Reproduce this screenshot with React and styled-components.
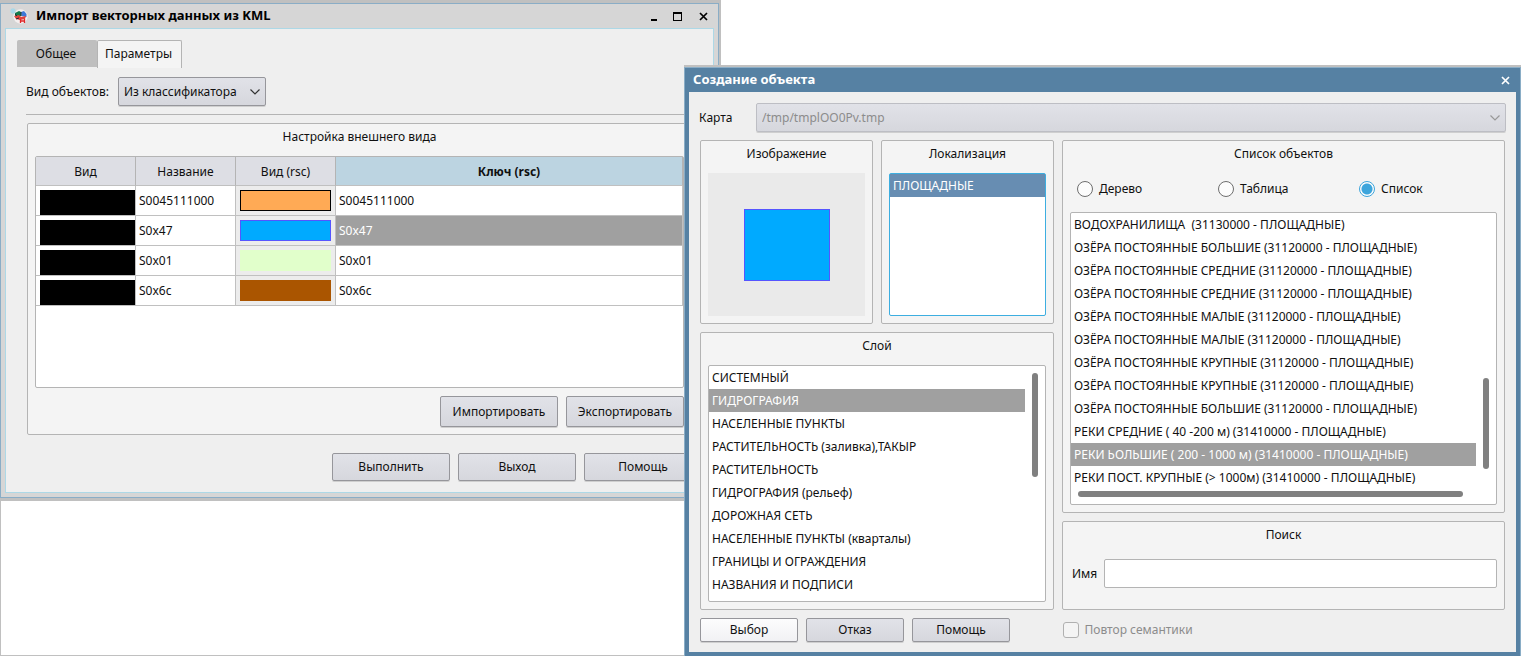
import React, { useState } from "react";
import styled, { createGlobalStyle } from "styled-components";

const GlobalStyle = createGlobalStyle`
	* {
		box-sizing: border-box;
	}
	body {
		margin: 0;
		background: #fff;
	}
	body, button, select, input {
		font-family: "Noto Sans", "Open Sans", sans-serif;
		font-size: 12px;
		line-height: 16px;
		color: #101010;
	}
`;

const Desktop = styled.div`
	position: relative;
	min-height: 100vh;
	border-left: 1px solid #c0c0c0;
	border-bottom: 1px solid #c0c0c0;
`;

/* import window */

const ImportShadow = styled.section`
	position: absolute;
	top: 0;
	left: -1px;
	right: 800px;
	padding: 3px 2px 3px 0;
	background: #c0c0c0;
`;

const ImportFrame = styled.div`
	border: 1px solid #8aadc6;
	padding: 0 4px 4px;
	background: #d6d6d6;
`;

const ImportTitleBar = styled.header`
	display: flex;
	align-items: center;
	height: 24px;
	padding: 0 1px 0 5px;
	gap: 8px;
	color: #000;
`;

const WindowTitle = styled.h1`
	flex: 1;
	margin: 0;
	padding-bottom: 2px;
	font-size: 13px;
	line-height: 18px;
	font-weight: bold;
`;

const WindowButtons = styled.div`
	display: flex;
`;

const WindowButton = styled.button`
	display: flex;
	align-items: center;
	justify-content: center;
	width: ${props => props.$width || 22}px;
	height: 20px;
	padding: 0;
	border: 0;
	background: none;
	color: inherit;
`;

const ImportBody = styled.div`
	border: 1px solid #add8e6;
	padding: 11px;
	background: #efefef;
`;

const Tabs = styled.div`
	display: flex;
	height: 28px;
`;

const Tab = styled.button`
	width: ${props => (props.$active ? 85 : 80)}px;
	height: ${props => (props.$active ? 28 : 27)}px;
	padding: 0 2px ${props => (props.$active ? 2 : 0)}px 0;
	border: 1px solid ${props => (props.$active ? "#b4b4b4" : "#bfbfbf")};
	border-bottom: 0;
	border-radius: 2px 2px 0 0;
	background: ${props => (props.$active ? "#f4f4f4" : "#bfbfbf")};
`;

const TabPanel = styled.div`
	padding: 9px 9px 0;
`;

const KindRow = styled.div`
	display: flex;
	align-items: center;
	gap: 9px;
	padding-bottom: 8px;
	border-bottom: 1px solid #b4b4b4;
`;

const SelectBox = styled.div`
	display: grid;
	align-items: center;
	width: ${props => props.$width || "auto"};
	flex: ${props => (props.$grow ? 1 : "none")};

	> * {
		grid-area: 1 / 1;
	}
	> svg {
		justify-self: end;
		margin-right: 5px;
		pointer-events: none;
	}
`;

const Select = styled.select`
	appearance: none;
	width: 100%;
	height: 29px;
	padding: 0 24px 0 5px;
	border: 1px solid #96969b;
	border-radius: 2px;
	background: linear-gradient(#e1e2e8, #d6d7dd);
	box-shadow: 0 1px 0 #cfcfcf;

	&:disabled {
		border-color: #bdbec4;
		color: #8c8c8c;
		opacity: 1;
	}
`;

const Group = styled.fieldset`
	display: flex;
	flex-direction: column;
	min-width: 0;
	margin: 0;
	padding: 5px 7px 7px;
	border: 1px solid #b4b4b4;
	border-radius: 2px;
	background: #f4f4f4;
`;

const AppearanceGroup = styled(Group)`
	margin: 8px 1px 0;
`;

const GroupTitle = styled.h2`
	margin: 0 0 11px;
	font-size: 12px;
	line-height: 16px;
	font-weight: normal;
	text-align: center;
`;

const TableFrame = styled.div`
	height: 232px;
	border: 1px solid #b4b4b4;
	border-radius: 2px;
	background: #fff;
`;

const Table = styled.table`
	width: 100%;
	table-layout: fixed;
	border-collapse: separate;
	border-spacing: 0;
`;

const HeadCell = styled.th`
	width: ${props => (props.$wide ? "auto" : "100px")};
	height: 29px;
	padding: 2px 0 0;
	border-right: 1px solid #b4b4b4;
	border-bottom: 1px solid #c0c0c0;
	background: ${props => (props.$wide ? "#bcd4e1" : "#dddee4")};
	font-weight: ${props => (props.$wide ? "bold" : "normal")};
`;

const Cell = styled.td`
	height: 30px;
	padding: ${props => props.$pad || "0 3px"};
	border-right: 1px solid #c0c0c0;
	border-bottom: 1px solid #c0c0c0;
	background: ${props => props.$bg || "#fff"};
	color: ${props => (props.$selected ? "#fff" : "inherit")};
`;

const Swatch = styled.div`
	height: ${props => props.$height || 21}px;
	border: 1px solid ${props => props.$border || props.$color};
	background: ${props => props.$color};
`;

const Buttons = styled.div`
	display: flex;
	justify-content: ${props => (props.$start ? "flex-start" : "flex-end")};
	gap: 8px;
	margin-top: ${props => props.$top || 0}px;
`;

const Button = styled.button`
	width: ${props => props.$width || 118}px;
	height: ${props => props.$height || 28}px;
	padding: 0;
	border: 1px solid #96969b;
	border-radius: 2px;
	background: ${props =>
		props.$light
			? "linear-gradient(#fcfcfd, #f1f1f4)"
			: "linear-gradient(#e1e2e8, #d6d7dd)"};
	box-shadow: 0 1px 0 #cfcfcf;
`;

/* object dialog */

const DialogShadow = styled.section`
	position: absolute;
	top: 65px;
	left: 683px;
	right: 0;
	padding-top: 2px;
	background: #c0c0c0;
`;

const DialogFrame = styled.div`
	border: 1px solid #8aadc6;
	border-bottom: 0;
	padding: 0 4px 4px;
	background: #5681a3;
`;

const DialogTitleBar = styled.header`
	display: flex;
	align-items: center;
	height: 24px;
	padding-left: 4px;
	color: #fff;
`;

const DialogBody = styled.div`
	padding: 11px 10px 10px;
	background: #efefef;
`;

const MapRow = styled.div`
	display: flex;
	align-items: center;

	> label {
		width: 57px;
	}
`;

const Columns = styled.div`
	display: grid;
	grid-template-columns: 354fr 443fr;
	gap: 8px;
	margin: 8px 1px 0;
`;

const Column = styled.div`
	display: flex;
	flex-direction: column;
	gap: 8px;
	min-width: 0;
`;

const Pair = styled.div`
	display: grid;
	grid-template-columns: 1fr 1fr;
	gap: 8px;
	height: 184px;
`;

const Preview = styled.div`
	display: flex;
	flex: 1;
	align-items: center;
	justify-content: center;
	background: #eaeaea;

	> div {
		width: 86px;
		height: 72px;
		border: 1px solid #5555ff;
		background: #00aaff;
	}
`;

const ListBox = styled.div`
	display: flex;
	height: ${props => props.$height}px;
	border: 1px solid ${props => (props.$focused ? "#3daee0" : "#b4b4b4")};
	border-radius: 2px;
	background: #fff;
`;

const ListColumn = styled.div`
	flex: 1;
	min-width: 0;
`;

const List = styled.ul`
	flex: 1;
	min-width: 0;
	margin: 0;
	padding: 0;
	list-style: none;
`;

const Item = styled.li`
	height: 23px;
	padding: 0 3px;
	line-height: 23px;
	white-space: pre;
	overflow: hidden;
	background: ${props =>
		props.$selected ? (props.$active ? "#678db2" : "#a0a0a0") : "none"};
	color: ${props => (props.$selected ? "#fff" : "inherit")};
`;

const VerticalTrack = styled.div`
	width: 20px;
	padding: ${props => props.$top}px 7px 0;
`;

const HorizontalTrack = styled.div`
	padding: 2px 13px 0 7px;
`;

const Thumb = styled.div`
	height: ${props => props.$size || 6}px;
	border-radius: 3px;
	background: #808080;
`;

const Views = styled.div`
	display: grid;
	grid-template-columns: 141px 141px 1fr;
	margin: 8px 0 15px;
	padding-left: 7px;
`;

const Choice = styled.label`
	display: flex;
	align-items: center;
	gap: 6px;
	color: ${props => (props.$disabled ? "#8c8c8c" : "inherit")};
`;

const Radio = styled.input`
	appearance: none;
	width: 16px;
	height: 16px;
	margin: 0;
	border: 1px solid #6e6e6e;
	border-radius: 50%;
	background: #fcfcfc;

	&:checked {
		border-color: #3da5dc;
		background: radial-gradient(#3da5dc 5px, #fcfcfc 6px);
	}
`;

const Checkbox = styled.input`
	appearance: none;
	width: 16px;
	height: 16px;
	margin: 0;
	border: 1px solid #b0b0b0;
	border-radius: 3px;
	background: #f4f4f4;
`;

const SearchRow = styled.div`
	display: flex;
	align-items: center;
	gap: 7px;
	margin-top: 5px;
	padding: 0 0 14px 2px;
`;

const TextInput = styled.input`
	flex: 1;
	min-width: 0;
	height: 29px;
	padding: 0 4px;
	border: 1px solid #b4b4b4;
	border-radius: 2px;
	background: #fff;
`;

const Footer = styled.div`
	display: grid;
	grid-template-columns: 354fr 443fr;
	align-items: center;
	gap: 9px;
	margin: 8px 1px 0;
`;

const Chevron = ({ color = "#333" }) => (
	<svg width="12" height="8" viewBox="0 0 12 8" fill="none" stroke={color}>
		<path d="M1.5 1.5 L6 6 L10.5 1.5" strokeWidth="1.2" />
	</svg>
);

const CloseIcon = () => (
	<svg width="9" height="9" viewBox="0 0 9 9" fill="none" stroke="currentColor">
		<path d="M1 1 L8 8 M8 1 L1 8" strokeWidth="1.7" />
	</svg>
);

const AppIcon = () => (
	<svg width="18" height="16" viewBox="0 0 18 16">
		<circle cx="10.5" cy="8.5" r="7.2" fill="#f4efef" />
		<path d="M0 3h6M3 0v6M1 1l4 4M5 1L1 5" stroke="#a8d8e8" strokeWidth="1.2" />
		<path d="M5 5l4-2 2 1v4l-6 1z" fill="#137a4a" />
		<path d="M11 4l3-1 2.500 3v3l-5-1z" fill="#3b78d8" />
		<path d="M4 8l5-1 2 2 5-1-1 3-5 1-4-1z" fill="#e0433c" />
		<path d="M5 6l2 2M11 4v4M6 11l3-1" stroke="#263238" />
		<path d="M10.500 11v4M14.500 11v4M10.500 13h4" stroke="#e02828" strokeWidth="1.3" />
	</svg>
);

const columns = ["Вид", "Название", "Вид (rsc)", "Ключ (rsc)"];

const rows = [
	{ key: "S0045111000", color: "#ffaa55", border: "#000" },
	{ key: "S0x47", color: "#00aaff", border: "#5555ff" },
	{ key: "S0x01", color: "#e1ffcb" },
	{ key: "S0x6c", color: "#aa5500" }
];

const layers = [
	"СИСТЕМНЫЙ",
	"ГИДРОГРАФИЯ",
	"НАСЕЛЕННЫЕ ПУНКТЫ",
	"РАСТИТЕЛЬНОСТЬ (заливка),ТАКЫР",
	"РАСТИТЕЛЬНОСТЬ",
	"ГИДРОГРАФИЯ (рельеф)",
	"ДОРОЖНАЯ СЕТЬ",
	"НАСЕЛЕННЫЕ ПУНКТЫ (кварталы)",
	"ГРАНИЦЫ И ОГРАЖДЕНИЯ",
	"НАЗВАНИЯ И ПОДПИСИ"
];

const objects = [
	"ВОДОХРАНИЛИЩА  (31130000 - ПЛОЩАДНЫЕ)",
	"ОЗЁРА ПОСТОЯННЫЕ БОЛЬШИЕ (31120000 - ПЛОЩАДНЫЕ)",
	"ОЗЁРА ПОСТОЯННЫЕ СРЕДНИЕ (31120000 - ПЛОЩАДНЫЕ)",
	"ОЗЁРА ПОСТОЯННЫЕ СРЕДНИЕ (31120000 - ПЛОЩАДНЫЕ)",
	"ОЗЁРА ПОСТОЯННЫЕ МАЛЫЕ (31120000 - ПЛОЩАДНЫЕ)",
	"ОЗЁРА ПОСТОЯННЫЕ МАЛЫЕ (31120000 - ПЛОЩАДНЫЕ)",
	"ОЗЁРА ПОСТОЯННЫЕ КРУПНЫЕ (31120000 - ПЛОЩАДНЫЕ)",
	"ОЗЁРА ПОСТОЯННЫЕ КРУПНЫЕ (31120000 - ПЛОЩАДНЫЕ)",
	"ОЗЁРА ПОСТОЯННЫЕ БОЛЬШИЕ (31120000 - ПЛОЩАДНЫЕ)",
	"РЕКИ СРЕДНИЕ ( 40 -200 м) (31410000 - ПЛОЩАДНЫЕ)",
	"РЕКИ ЬОЛЬШИЕ ( 200 - 1000 м) (31410000 - ПЛОЩАДНЫЕ)",
	"РЕКИ ПОСТ. КРУПНЫЕ (> 1000м) (31410000 - ПЛОЩАДНЫЕ)"
];

const views = ["Дерево", "Таблица", "Список"];

const Items = ({ label, items, selected, onSelect, active }) => (
	<List role="listbox" aria-label={label}>
		{items.map((text, i) => (
			<Item
				key={i}
				role="option"
				aria-selected={i === selected}
				$selected={i === selected}
				$active={active}
				onClick={() => onSelect && onSelect(i)}
			>
				{text}
			</Item>
		))}
	</List>
);

const ImportWindow = () => {
	const [current, setCurrent] = useState(1);

	return (
		<ImportShadow>
			<ImportFrame>
				<ImportTitleBar>
					<AppIcon />
					<WindowTitle>Импорт векторных данных из KML</WindowTitle>
					<WindowButtons>
						<WindowButton aria-label="Свернуть" $width={14}>
							<svg width="6" height="9" viewBox="0 0 6 9">
								<path d="M0 7h6v2H0z" />
							</svg>
						</WindowButton>
						<WindowButton aria-label="Развернуть" $width={32}>
							<svg width="9" height="9" viewBox="0 0 9 9">
								<path d="M0 0h9v9H0zM1 2v6h7V2z" fillRule="evenodd" />
							</svg>
						</WindowButton>
						<WindowButton aria-label="Закрыть" $width={20}>
							<CloseIcon />
						</WindowButton>
					</WindowButtons>
				</ImportTitleBar>
				<ImportBody>
					<Tabs role="tablist">
						<Tab role="tab" aria-selected="false">
							Общее
						</Tab>
						<Tab role="tab" aria-selected="true" $active>
							Параметры
						</Tab>
					</Tabs>
					<TabPanel role="tabpanel">
						<KindRow>
							<label htmlFor="kind">Вид объектов:</label>
							<SelectBox $width="148px">
								<Select id="kind">
									<option>Из классификатора</option>
								</Select>
								<Chevron />
							</SelectBox>
						</KindRow>
						<AppearanceGroup>
							<GroupTitle>Настройка внешнего вида</GroupTitle>
							<TableFrame>
								<Table>
									<thead>
										<tr>
											{columns.map((name, i) => (
												<HeadCell key={name} $wide={i === 3}>
													{name}
												</HeadCell>
											))}
										</tr>
									</thead>
									<tbody>
										{rows.map((row, i) => (
											<tr key={row.key} onClick={() => setCurrent(i)}>
												<Cell $pad="4px 0 0 4px">
													<Swatch $color="#000" $height={25} />
												</Cell>
												<Cell>{row.key}</Cell>
												<Cell $pad="0 4px" $bg="#ececec">
													<Swatch $color={row.color} $border={row.border} />
												</Cell>
												<Cell
													$selected={i === current}
													$bg={i === current ? "#a0a0a0" : "#fff"}
												>
													{row.key}
												</Cell>
											</tr>
										))}
									</tbody>
								</Table>
							</TableFrame>
							<Buttons $top={8}>
								<Button $height={31}>Импортировать</Button>
								<Button $height={31}>Экспортировать</Button>
							</Buttons>
						</AppearanceGroup>
					</TabPanel>
					<Buttons $top={18}>
						<Button>Выполнить</Button>
						<Button>Выход</Button>
						<Button>Помощь</Button>
					</Buttons>
				</ImportBody>
			</ImportFrame>
		</ImportShadow>
	);
};

const ObjectDialog = () => {
	const [layer, setLayer] = useState(1);
	const [object, setObject] = useState(10);
	const [view, setView] = useState("Список");

	return (
		<DialogShadow>
			<DialogFrame>
				<DialogTitleBar>
					<WindowTitle>Создание объекта</WindowTitle>
					<WindowButton aria-label="Закрыть">
						<CloseIcon />
					</WindowButton>
				</DialogTitleBar>
				<DialogBody>
					<MapRow>
						<label htmlFor="map">Карта</label>
						<SelectBox $grow>
							<Select id="map" disabled>
								<option>/tmp/tmplOO0Pv.tmp</option>
							</Select>
							<Chevron color="#999" />
						</SelectBox>
					</MapRow>
					<Columns>
						<Column>
							<Pair>
								<Group>
									<GroupTitle>Изображение</GroupTitle>
									<Preview>
										<div />
									</Preview>
								</Group>
								<Group>
									<GroupTitle>Локализация</GroupTitle>
									<ListBox $height={143} $focused>
										<Items label="Локализация" items={["ПЛОЩАДНЫЕ"]} selected={0} active />
									</ListBox>
								</Group>
							</Pair>
							<Group>
								<GroupTitle>Слой</GroupTitle>
								<ListBox $height={237}>
									<Items label="Слой" items={layers} selected={layer} onSelect={setLayer} />
									<VerticalTrack $top={7}>
										<Thumb $size={104} />
									</VerticalTrack>
								</ListBox>
							</Group>
						</Column>
						<Column>
							<Group>
								<GroupTitle>Список объектов</GroupTitle>
								<Views>
									{views.map(name => (
										<Choice key={name}>
											<Radio
												type="radio"
												name="view"
												checked={view === name}
												onChange={() => setView(name)}
											/>
											{name}
										</Choice>
									))}
								</Views>
								<ListBox $height={293}>
									<ListColumn>
										<Items
											label="Список объектов"
											items={objects}
											selected={object}
											onSelect={setObject}
										/>
										<HorizontalTrack>
											<Thumb />
										</HorizontalTrack>
									</ListColumn>
									<VerticalTrack $top={165}>
										<Thumb $size={91} />
									</VerticalTrack>
								</ListBox>
							</Group>
							<Group>
								<GroupTitle>Поиск</GroupTitle>
								<SearchRow>
									<label htmlFor="name">Имя</label>
									<TextInput id="name" type="text" />
								</SearchRow>
							</Group>
						</Column>
					</Columns>
					<Footer>
						<Buttons $start>
							<Button $width={98} $height={24} $light>
								Выбор
							</Button>
							<Button $width={98} $height={24}>
								Отказ
							</Button>
							<Button $width={98} $height={24}>
								Помощь
							</Button>
						</Buttons>
						<Choice $disabled>
							<Checkbox type="checkbox" disabled />
							Повтор семантики
						</Choice>
					</Footer>
				</DialogBody>
			</DialogFrame>
		</DialogShadow>
	);
};

const App = () => (
	<>
		<GlobalStyle />
		<Desktop>
			<ImportWindow />
			<ObjectDialog />
		</Desktop>
	</>
);

export default App;
